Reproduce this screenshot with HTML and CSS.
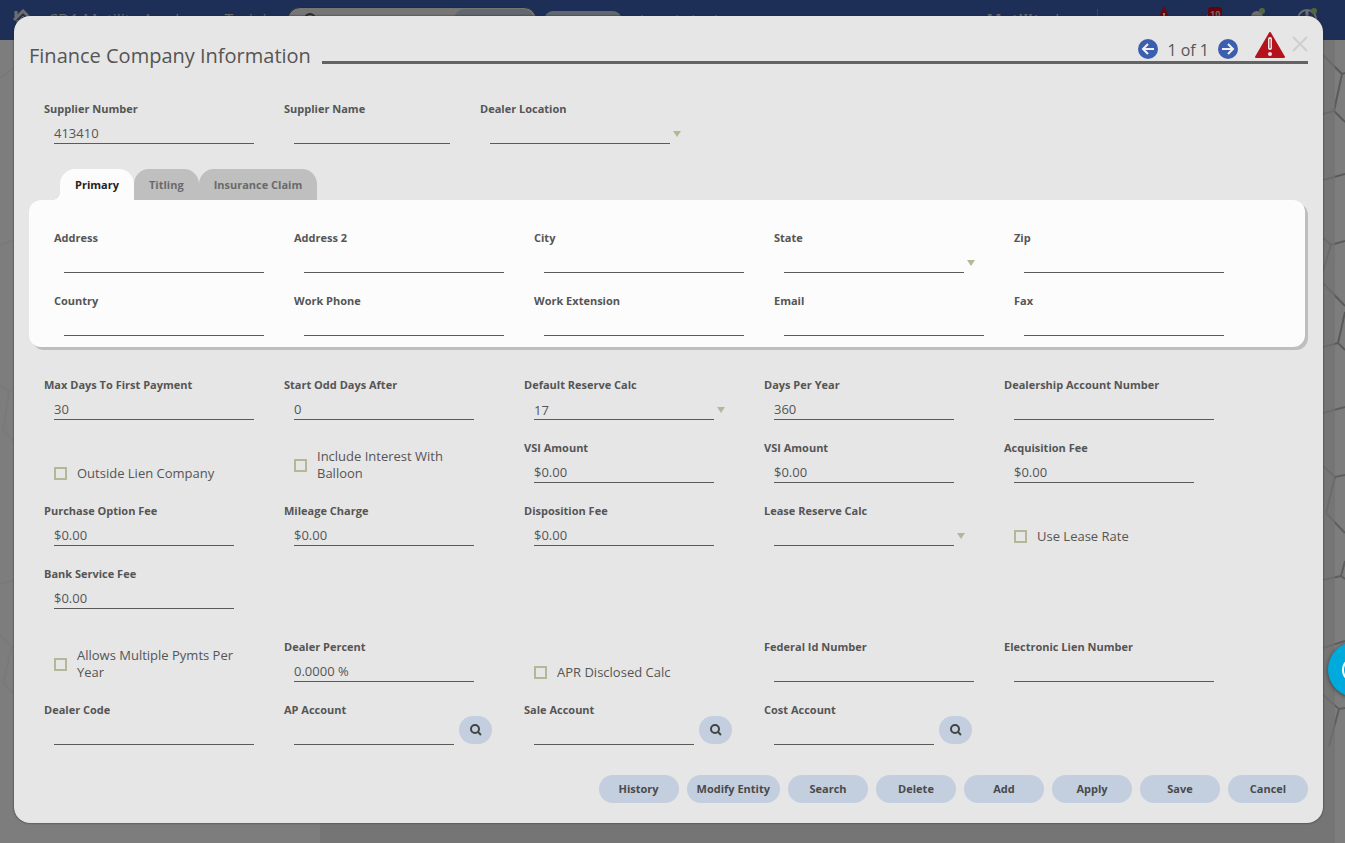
FILE: index.html
```html
<!DOCTYPE html>
<html lang="en">
<head>
    <meta charset="utf-8">
    <title>Finance Company Information</title>
    <link rel="stylesheet" href="styles.css">
</head>
<body>
    <!-- Page behind the dialog -->
    <div class="page">
        <header class="topbar">
            <a class="home" href="#" aria-label="Home">
                <svg width="20" height="22" viewBox="0 0 20 22"><path d="M1 11 L10 2 L19 11 M3 8 V2 M5 11 V20 H15 V11" fill="none" stroke="#ddd" stroke-width="3"/><path d="M5 12 L10 7 L15 12" fill="none" stroke="#ddd" stroke-width="1"/></svg>
            </a>
            <span class="site-name">CD1 Motility Academy - Training</span>
            <div class="site-search">
                <svg width="16" height="16" viewBox="0 0 16 16"><circle cx="7" cy="7" r="5" fill="none" stroke="#555" stroke-width="2"/><path d="M11 11 L15 15" stroke="#555" stroke-width="2"/></svg>
                <span class="search-scope"></span>
            </div>
            <span class="pill"></span>
            <a class="top-link" href="#">knowledge base</a>
            <div class="top-right">
                <strong>Motility</strong>
                <span class="user">Inc</span>
                <svg width="22" height="28" viewBox="0 0 22 28"><path d="M11 0 L22 22 H0 Z" fill="#d01020"/><path d="M11 7 V15" stroke="#fff" stroke-width="2"/></svg>
                <span class="alerts"><svg width="20" height="20" viewBox="0 0 20 20"><path d="M3 16 V9 Q3 4 8 4 Q13 4 13 9 V16 Z" fill="#ddd"/></svg><b class="badge">10</b></span>
                <svg width="18" height="24" viewBox="0 0 18 24"><circle cx="6" cy="9" r="6" fill="#ddd"/><circle cx="11" cy="3" r="3" fill="#a6cf7c"/></svg>
                <svg width="22" height="24" viewBox="0 0 22 24"><circle cx="10" cy="11" r="9" fill="none" stroke="#ddd" stroke-width="2"/><path d="M10 3 V12 L16 9" fill="none" stroke="#ddd" stroke-width="3"/><circle cx="17" cy="3" r="3" fill="#a6cf7c"/></svg>
            </div>
        </header>
        <svg class="hexes hexes-left" width="14" height="803" viewBox="0 0 14 803" fill="none" stroke="#f2f2f2" stroke-width="2"><path d="M0 38 L14 28 M0 205 L14 200 M0 345 L9 352 L14 348 M9 352 L3 390 L14 402 M0 544 L14 540 M0 595 L12 607 L3 643 L14 654"/></svg>
        <svg class="hexes hexes-right" width="22" height="803" viewBox="0 0 22 803" fill="none" stroke="#b4b4b4" stroke-width="2"><path d="M0 15 L19 34 L22 33 M19 34 L11 71 L22 82 M11 71 L0 74 M0 140 L22 134 M0 198 L8 205 L22 201 M8 205 L0 231 M0 243 L22 266 M22 272 L15 303 L22 310 M15 303 L0 307"/><path d="M0 373 L22 367 M0 426 L12 437 L22 435 M12 437 L3 473 L22 493 M22 521 L18 536 L22 539 M18 536 L0 540 M0 608 L22 601 M0 655 L16 669 L22 668 M16 669 L6 706" stroke="#bcbcbc"/></svg>
        <div class="content"></div>
    </div>

    <div class="overlay">
        <form class="modal">
            <div class="modal-header">
                <h1>Finance Company Information</h1>
                <div class="modal-tools">
                    <button type="button" class="icon-button pager-button" aria-label="Previous">
                        <svg width="20" height="20" viewBox="0 0 20 20"><circle cx="10" cy="10" r="10" fill="#3b5eae"/><path d="M16 10 H5 M10 5 L5 10 L10 15" fill="none" stroke="#f0f0f0" stroke-width="2"/></svg>
                    </button>
                    <span class="pager-text">1 of 1</span>
                    <button type="button" class="icon-button pager-button" aria-label="Next">
                        <svg width="20" height="20" viewBox="0 0 20 20"><circle cx="10" cy="10" r="10" fill="#3b5eae"/><path d="M4 10 H15 M10 5 L15 10 L10 15" fill="none" stroke="#f0f0f0" stroke-width="2"/></svg>
                    </button>
                    <svg class="warning" width="30" height="26" viewBox="0 0 30 26"><path d="M15 1 L29 25 H1 Z" fill="#b4131c" stroke="#b4131c" stroke-width="2" stroke-linejoin="round"/><path d="M15 7 V16" stroke="#e6e6e6" stroke-width="4" stroke-linecap="round"/><path d="M15 7 V16" stroke="#b4131c" stroke-width="1"/><circle cx="15" cy="22" r="2" fill="#e6e6e6"/></svg>
                    <button type="button" class="icon-button close" aria-label="Close">
                        <svg width="16" height="16" viewBox="0 0 16 16"><path d="M1 1 L15 15 M15 1 L1 15" stroke="#cfcfcf" stroke-width="2"/></svg>
                    </button>
                </div>
            </div>

            <div class="fields supplier">
                <div class="field"><label for="supplierNumber">Supplier Number</label><input type="text" id="supplierNumber" value="413410"></div>
                <div class="field"><label for="supplierName">Supplier Name</label><input class="short" type="text" id="supplierName"></div>
                <div class="field"><label for="dealerLocation">Dealer Location</label><div class="select"><select id="dealerLocation"><option></option></select></div></div>
            </div>

            <!-- Address tabs -->
            <div class="tabs" role="tablist">
                <button type="button" class="tab active" role="tab" aria-selected="true">Primary</button>
                <button type="button" class="tab" role="tab">Titling</button>
                <button type="button" class="tab" role="tab">Insurance Claim</button>
            </div>
            <div class="panel fields">
                <div class="field"><label for="address">Address</label><input type="text" id="address"></div>
                <div class="field"><label for="address2">Address 2</label><input type="text" id="address2"></div>
                <div class="field"><label for="city">City</label><input type="text" id="city"></div>
                <div class="field"><label for="state">State</label><div class="select"><select id="state"><option></option></select></div></div>
                <div class="field"><label for="zip">Zip</label><input type="text" id="zip"></div>
                <div class="field"><label for="country">Country</label><input type="text" id="country"></div>
                <div class="field"><label for="workPhone">Work Phone</label><input type="text" id="workPhone"></div>
                <div class="field"><label for="workExt">Work Extension</label><input type="text" id="workExt"></div>
                <div class="field"><label for="email">Email</label><input type="text" id="email"></div>
                <div class="field"><label for="fax">Fax</label><input type="text" id="fax"></div>
            </div>

            <!-- Finance settings -->
            <div class="fields settings">
                <div class="field"><label for="maxDays">Max Days To First Payment</label><input type="text" id="maxDays" value="30"></div>
                <div class="field"><label for="oddDays">Start Odd Days After</label><input class="medium" type="text" id="oddDays" value="0"></div>
                <div class="field"><label for="reserveCalc">Default Reserve Calc</label><div class="select"><select id="reserveCalc"><option>17</option></select></div></div>
                <div class="field"><label for="daysPerYear">Days Per Year</label><input class="medium" type="text" id="daysPerYear" value="360"></div>
                <div class="field"><label for="dealershipAccount">Dealership Account Number</label><input type="text" id="dealershipAccount"></div>

                <label class="check"><input type="checkbox"><span>Outside Lien Company</span></label>
                <label class="check"><input type="checkbox"><span>Include Interest With Balloon</span></label>
                <div class="field"><label for="vsi1">VSI Amount</label><input class="medium" type="text" id="vsi1" value="$0.00"></div>
                <div class="field"><label for="vsi2">VSI Amount</label><input class="medium" type="text" id="vsi2" value="$0.00"></div>
                <div class="field"><label for="acquisitionFee">Acquisition Fee</label><input class="medium" type="text" id="acquisitionFee" value="$0.00"></div>

                <div class="field"><label for="purchaseFee">Purchase Option Fee</label><input class="medium" type="text" id="purchaseFee" value="$0.00"></div>
                <div class="field"><label for="mileage">Mileage Charge</label><input class="medium" type="text" id="mileage" value="$0.00"></div>
                <div class="field"><label for="disposition">Disposition Fee</label><input class="medium" type="text" id="disposition" value="$0.00"></div>
                <div class="field"><label for="leaseCalc">Lease Reserve Calc</label><div class="select"><select id="leaseCalc"><option></option></select></div></div>
                <label class="check"><input type="checkbox"><span>Use Lease Rate</span></label>

                <div class="field"><label for="bankFee">Bank Service Fee</label><input class="medium" type="text" id="bankFee" value="$0.00"></div>
            </div>

            <div class="fields dealer">
                <label class="check"><input type="checkbox"><span>Allows Multiple Pymts Per Year</span></label>
                <div class="field"><label for="dealerPercent">Dealer Percent</label><input class="medium" type="text" id="dealerPercent" value="0.0000 %"></div>
                <label class="check"><input type="checkbox"><span>APR Disclosed Calc</span></label>
                <div class="field"><label for="federalId">Federal Id Number</label><input type="text" id="federalId"></div>
                <div class="field"><label for="lienNumber">Electronic Lien Number</label><input type="text" id="lienNumber"></div>

                <div class="field"><label for="dealerCode">Dealer Code</label><input type="text" id="dealerCode"></div>
                <div class="field"><label for="apAccount">AP Account</label>
                    <div class="lookup"><input type="text" id="apAccount"><button type="button" aria-label="Find AP account"><svg width="12" height="12" viewBox="0 0 12 12"><circle cx="5" cy="5" r="4" fill="none" stroke="#444" stroke-width="2"/><path d="M8 8 L11 11" stroke="#444" stroke-width="2"/></svg></button></div>
                </div>
                <div class="field"><label for="saleAccount">Sale Account</label>
                    <div class="lookup"><input type="text" id="saleAccount"><button type="button" aria-label="Find sale account"><svg width="12" height="12" viewBox="0 0 12 12"><circle cx="5" cy="5" r="4" fill="none" stroke="#444" stroke-width="2"/><path d="M8 8 L11 11" stroke="#444" stroke-width="2"/></svg></button></div>
                </div>
                <div class="field"><label for="costAccount">Cost Account</label>
                    <div class="lookup"><input type="text" id="costAccount"><button type="button" aria-label="Find cost account"><svg width="12" height="12" viewBox="0 0 12 12"><circle cx="5" cy="5" r="4" fill="none" stroke="#444" stroke-width="2"/><path d="M8 8 L11 11" stroke="#444" stroke-width="2"/></svg></button></div>
                </div>
            </div>

            <div class="actions">
                <button type="button">History</button>
                <button type="button">Modify Entity</button>
                <button type="button">Search</button>
                <button type="button">Delete</button>
                <button type="button">Add</button>
                <button type="button">Apply</button>
                <button type="button">Save</button>
                <button type="button">Cancel</button>
            </div>
        </form>
    </div>

    <button type="button" class="chat" aria-label="Chat">
        <svg width="28" height="28" viewBox="0 0 28 28"><circle cx="14" cy="14" r="12" fill="none" stroke="#fff" stroke-width="2"/></svg>
    </button>
</body>
</html>
```

FILE: styles.css
```css
* {
    box-sizing: border-box;
}

body {
    margin: 0;
    overflow: hidden;
    font-family: "Open Sans", sans-serif;
    font-size: 13px;
    color: #555;
}

button, input, select {
    font-family: inherit;
    font-size: inherit;
    color: inherit;
}

svg {
    display: block;
    flex-shrink: 0;
}

/* Page behind the dialog */
.page {
    position: fixed;
    inset: 0;
    background: #fbfbfb;
}

.topbar {
    display: flex;
    align-items: center;
    height: 40px;
    padding: 0 26px 0 13px;
    background: #3c5eae;
    color: #ddd;
    white-space: nowrap;
}

.site-name {
    width: 239px;
    margin-left: 15px;
    overflow: hidden;
    font-size: 16px;
}

.site-search {
    display: flex;
    align-items: center;
    justify-content: space-between;
    width: 250px;
    height: 26px;
    padding: 0 2px 0 15px;
    border: 1px solid #555;
    border-radius: 13px;
    background: #ececec;
}

.search-scope {
    width: 80px;
    height: 22px;
    border-radius: 11px;
    background: #c4d0e0;
}

.pill {
    width: 78px;
    height: 18px;
    margin: 0 18px 0 7px;
    border-radius: 9px;
    background: #c4d0e0;
}

.top-link {
    color: #ddd;
    font-size: 14px;
    text-decoration: none;
}

.top-right {
    display: flex;
    align-items: center;
    gap: 28px;
    margin-left: auto;
}

.top-right strong {
    margin-right: -22px;
    font-size: 16px;
}

.user {
    margin-right: 27px;
    padding-right: 20px;
    border-right: 1px solid #889;
    font-size: 16px;
}

.alerts {
    position: relative;
}

.badge {
    position: absolute;
    top: -3px;
    left: 5px;
    padding: 0 2px;
    border-radius: 3px;
    background: #d00010;
    font-size: 9px;
}

.hexes {
    position: absolute;
    top: 40px;
}

.hexes-left {
    left: 0;
}

.hexes-right {
    right: 0;
}

.content {
    position: absolute;
    inset: 40px 10px 0 320px;
    background: rgba(227, 227, 227, 0.7);
}

/* Dialog */
.overlay {
    position: fixed;
    inset: 0;
    padding: 16px 22px 20px 14px;
    background: rgba(0, 0, 0, 0.5);
}

.modal {
    padding: 14px 15px 20px;
    border-radius: 16px;
    background: #e6e6e6;
    box-shadow: 0 0 2px #222;
}

.modal-header {
    display: flex;
    align-items: flex-end;
    gap: 11px;
}

h1 {
    margin: 0;
    font-size: 20px;
    font-weight: normal;
    line-height: 28px;
}

.modal-tools {
    display: flex;
    flex: 1;
    align-items: flex-end;
    justify-content: flex-end;
    height: 34px;
    margin-bottom: 6px;
    border-bottom: 3px solid #636363;
}

.icon-button {
    padding: 0;
    border: none;
    background: none;
    cursor: pointer;
}

.pager-button {
    margin-bottom: 2px;
}

.pager-text {
    padding: 0 9px;
    font-size: 16px;
    line-height: 22px;
}

.warning {
    margin: 0 7px 3px 17px;
}

.close {
    margin-bottom: 9px;
}

.fields {
    display: grid;
    grid-template-columns: repeat(5, minmax(0, 240px));
    row-gap: 20px;
    padding: 0 15px;
}

.supplier {
    grid-template-columns: 240px 196px 240px;
    margin: 31px 0 25px;
}

.field > label {
    display: block;
    font-size: 11px;
    font-weight: bold;
    line-height: 16px;
}

input[type="text"], select {
    display: block;
    width: 200px;
    height: 27px;
    margin: 0 0 0 10px;
    padding: 8px 0 2px;
    border: none;
    border-bottom: 1px solid #5a5a5a;
    border-radius: 0;
    outline: none;
    background: transparent;
}

input.medium, select {
    width: 180px;
}

input.short {
    width: 156px;
}

select {
    appearance: none;
}

.select {
    display: flex;
    align-items: center;
    gap: 3px;
}

.select::after {
    content: "";
    margin-top: 6px;
    border: 4px solid transparent;
    border-top: 6px solid #b4b898;
    border-bottom: none;
}

.tabs {
    display: flex;
    padding-left: 31px;
}

.tab {
    height: 31px;
    padding: 0 15px;
    border: none;
    border-radius: 15px 15px 0 0;
    background: #bfbfbf;
    color: #6a6a6a;
    font-size: 11px;
    font-weight: bold;
}

.tab.active {
    position: relative;
    background: #fcfcfc;
    color: #222;
}

/* Curve where the active tab meets the panel */
.tab.active::before {
    content: "";
    position: absolute;
    left: -8px;
    bottom: 0;
    width: 8px;
    height: 8px;
    background: radial-gradient(circle at 0 0, transparent 8px, #fcfcfc 8px);
}

.panel {
    margin-right: 3px;
    padding: 30px 25px 11px;
    border-radius: 12px;
    background: #fcfcfc;
    box-shadow: 3px 3px 0 #bebebe;
}

.settings {
    margin-top: 30px;
}

.dealer {
    margin-top: 30px;
}

.check {
    display: flex;
    align-items: center;
    align-self: end;
    gap: 10px;
    padding: 0 40px 1px 10px;
    line-height: 17px;
}

.check input {
    flex-shrink: 0;
    appearance: none;
    width: 13px;
    height: 13px;
    margin: 0;
    border: 2px solid #b4b898;
}

.lookup {
    display: flex;
    align-items: flex-end;
    gap: 5px;
    height: 27px;
}

.lookup input[type="text"] {
    width: 160px;
}

.lookup button {
    display: flex;
    align-items: center;
    justify-content: center;
    width: 33px;
    height: 28px;
    margin-bottom: 1px;
    padding: 0;
    border: none;
    border-radius: 14px;
    background: #c3cfdf;
}

.actions {
    display: flex;
    justify-content: flex-end;
    gap: 8px;
    margin-top: 30px;
}

.actions button {
    min-width: 80px;
    height: 28px;
    padding: 0 10px 2px;
    border: none;
    border-radius: 14px;
    background: #c3cfdf;
    color: #4a4a4a;
    font-size: 11px;
    font-weight: bold;
    cursor: pointer;
}

.chat {
    position: fixed;
    top: 642px;
    right: -38px;
    width: 55px;
    height: 55px;
    padding: 0 13px;
    border: none;
    border-radius: 50%;
    background: #00aadd;
    box-shadow: 0 1px 4px rgba(0, 0, 0, 0.5);
}
```
